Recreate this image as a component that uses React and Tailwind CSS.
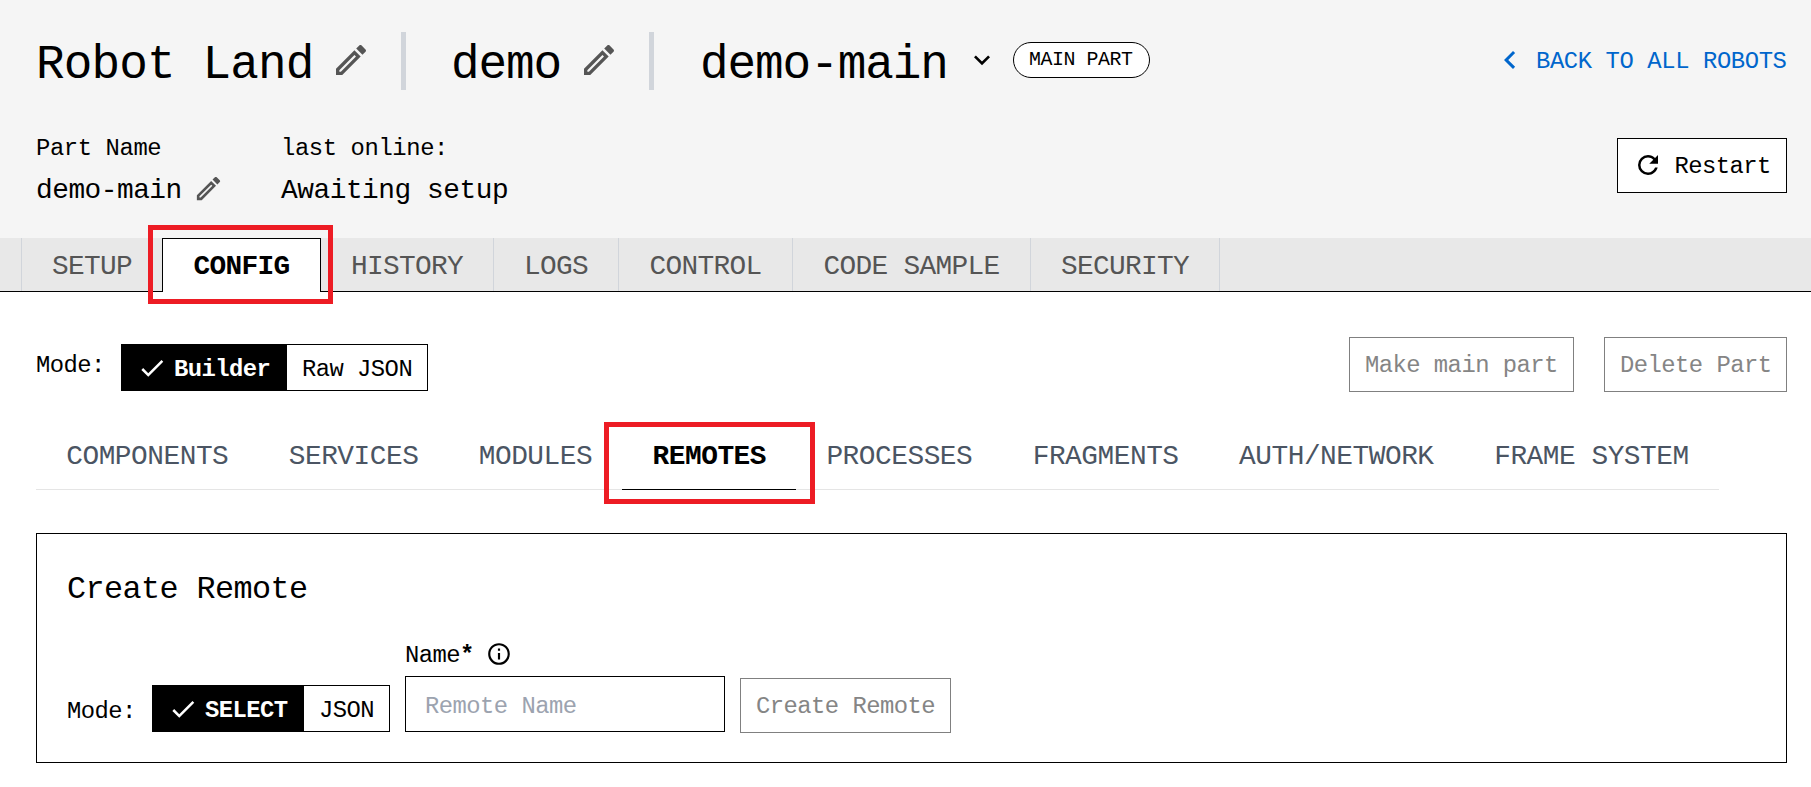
const ICONS = {
  pencil:
    'M14.06,9L15,9.94L5.92,19H5V18.08L14.06,9M17.66,3C17.41,3 17.15,3.1 16.96,3.29L15.13,5.12L18.88,8.87L20.71,7.04C21.1,6.65 21.1,6 20.71,5.63L18.37,3.29C18.17,3.09 17.92,3 17.66,3M14.06,6.19L3,17.25V21H6.75L17.81,9.94L14.06,6.19Z',
  chevronDown: 'M7.41,8.58L12,13.17L16.59,8.58L18,10L12,16L6,10L7.41,8.58Z',
  chevronLeft: 'M15.41,16.58L10.83,12L15.41,7.41L14,6L8,12L14,18L15.41,16.58Z',
  refresh:
    'M17.65,6.35C16.2,4.9 14.21,4 12,4A8,8 0 0,0 4,12A8,8 0 0,0 12,20C15.73,20 18.84,17.45 19.73,14H17.65C16.83,16.33 14.61,18 12,18A6,6 0 0,1 6,12A6,6 0 0,1 12,6C13.66,6 15.14,6.69 16.22,7.78L13,11H20V4L17.65,6.35Z',
  check: 'M21,7L9,19L3.5,13.5L4.91,12.09L9,16.17L19.59,5.59L21,7Z',
  info: 'M11,9H13V7H11M12,20C7.59,20 4,16.41 4,12C4,7.59 7.59,4 12,4C16.41,4 20,7.59 20,12C20,16.41 16.41,20 12,20M12,2A10,10 0 0,0 2,12A10,10 0 0,0 12,22A10,10 0 0,0 22,12A10,10 0 0,0 12,2M11,17H13V11H11V17Z',
};

function Icon({ name, className }) {
  return (
    <svg viewBox="0 0 24 24" fill="currentColor" className={`shrink-0 ${className}`} aria-hidden="true">
      <path d={ICONS[name]} />
    </svg>
  );
}

const mainTabs = [
  { label: 'SETUP', width: 'w-[141px]' },
  { label: 'CONFIG', width: 'w-[159px]', active: true },
  { label: 'HISTORY', width: 'w-[173px]' },
  { label: 'LOGS', width: 'w-[125px]' },
  { label: 'CONTROL', width: 'w-[174px]' },
  { label: 'CODE SAMPLE', width: 'w-[238px]' },
  { label: 'SECURITY', width: 'w-[189px]' },
];

const configTabs = [
  { label: 'COMPONENTS', width: 'w-[222.6px]' },
  { label: 'SERVICES', width: 'w-[190px]' },
  { label: 'MODULES', width: 'w-[173.8px]' },
  { label: 'REMOTES', width: 'w-[173.8px]', active: true },
  { label: 'PROCESSES', width: 'w-[206.3px]' },
  { label: 'FRAGMENTS', width: 'w-[206.3px]' },
  { label: 'AUTH/NETWORK', width: 'w-[255.1px]' },
  { label: 'FRAME SYSTEM', width: 'w-[255.1px]' },
];

function Toggle({ selected, other, className, selectedWidth }) {
  return (
    <div className={`flex h-[47px] border border-black bg-white ${className}`}>
      <div className={`flex bg-black pl-[15px] text-white ${selectedWidth}`}>
        <Icon name="check" className="mt-[8px] size-[30px]" />
        <span className="ml-[7px] mt-[12.6px] font-bold leading-6">{selected}</span>
      </div>
      <span className="ml-[15px] mt-[12.6px] leading-6">{other}</span>
    </div>
  );
}

function OutlineButton({ children, className }) {
  return (
    <button className={`flex h-[55px] items-start border border-[#808080] bg-white pl-[15px] pt-[15.6px] leading-6 text-[#858585] ${className}`}>
      {children}
    </button>
  );
}

export default function App() {
  return (
    <div className="relative h-[787px] w-[1811px] overflow-hidden whitespace-nowrap bg-white font-['Liberation_Mono',monospace] text-[23.85px] leading-6 text-black [&_*]:tracking-[-0.0226em]">
      <header className="h-[238px] bg-[#f5f5f5] pl-9 pr-6 pt-8">
        <div className="flex h-[106px] items-start">
          <h1 className="mt-[9px] w-[294.5px] text-[47.7px] leading-[48px] !tracking-[-0.018em]">Robot Land</h1>
          <Icon name="pencil" className="mt-2 size-10 text-[#555]" />
          <div className="ml-[30.5px] h-[58px] w-[5px] bg-[#d1d5db]" />
          <h1 className="ml-[45px] mt-[9px] w-[128px] text-[47.7px] leading-[48px]">demo</h1>
          <Icon name="pencil" className="mt-2 size-10 text-[#555]" />
          <div className="ml-[30px] h-[58px] w-[5px] bg-[#d1d5db]" />
          <h1 className="ml-[46px] mt-[9px] w-[265px] text-[47.7px] leading-[48px]">demo-main</h1>
          <Icon name="chevronDown" className="ml-px mt-3 size-8" />
          <div className="ml-[15px] mt-2.5 h-9 w-[137px] rounded-full border border-black bg-white pl-[15px] pt-[7px] text-[19.9px] leading-5">
            MAIN PART
          </div>
          <a className="ml-auto flex text-[#0066cc]">
            <Icon name="chevronLeft" className="mt-2.5 size-9" />
            <span className="ml-2 mt-[17.6px] w-[251px] !tracking-[-0.0165em]">BACK TO ALL ROBOTS</span>
          </a>
        </div>
        <div className="flex items-start">
          <div className="w-[245px]">
            <div className="mt-[-1.4px] !tracking-[-0.0165em]">Part Name</div>
            <div className="mt-[12px] flex h-8 items-start">
              <span className="mt-[4px] w-[157px] text-[27.8px] leading-7 !tracking-[-0.0175em]">demo-main</span>
              <Icon name="pencil" className="size-[31px] text-[#555]" />
            </div>
          </div>
          <div>
            <div className="mt-[-1.4px] !tracking-[-0.0165em]">last online:</div>
            <div className="mt-[16px] text-[27.8px] leading-7 !tracking-[-0.0165em]">Awaiting setup</div>
          </div>
          <button className="ml-auto flex h-[55px] w-[170px] items-start border border-black bg-white pl-[15px]">
            <Icon name="refresh" className="mt-[11px] size-[30px]" />
            <span className="ml-[11.5px] mt-[15.6px] leading-6">Restart</span>
          </button>
        </div>
      </header>

      <nav className="flex h-[54px] border-b border-black bg-[#e8e8e8] pl-[21px] text-[27.8px] leading-7 text-[#555]">
        {mainTabs.map((t, i) => (
          <div
            key={t.label}
            className={`flex justify-center pt-[14.6px] !tracking-[-0.025em] ${t.width} ${
              t.active
                ? 'h-[54px] border-x border-t border-black bg-white !pt-[13.6px] font-bold text-black'
                : i === 0
                  ? 'h-[53px] border-l border-[#d1d5db]'
                  : 'h-[53px] border-r border-[#d1d5db]'
            }`}
          >
            {t.label}
          </div>
        ))}
      </nav>

      <main className="pl-9 pr-6">
        <div className="flex h-[130px] items-start">
          <span className="mt-[62.4px] w-[85px]">Mode:</span>
          <Toggle selected="Builder" other="Raw JSON" className="mt-[52px] w-[307px]" selectedWidth="w-[165px]" />
          <OutlineButton className="ml-auto mt-[45px] w-[225px]">Make main part</OutlineButton>
          <OutlineButton className="ml-[30px] mt-[45px] w-[183px]">Delete Part</OutlineButton>
        </div>
        <nav className="flex h-[68px] w-[1683px] border-b border-[#e5e5e5] text-[27.8px] leading-7 text-[#4b5563]">
          {configTabs.map((t) => (
            <div
              key={t.label}
              className={`flex h-[68px] shrink-0 justify-center pt-[20.6px] [&>span]:tracking-[-0.017em] ${t.width} ${
                t.active ? 'border-b border-black font-bold text-black' : ''
              }`}
            >
              <span>{t.label}</span>
            </div>
          ))}
        </nav>
        <section className="mt-[43px] h-[230px] border border-black pl-[30px] pt-[40px]">
          <h2 className="text-[31.8px] leading-8 !tracking-[-0.018em]">Create Remote</h2>
          <div className="mt-[32px] flex items-start">
            <span className="mt-[61.6px] w-[85px]">Mode:</span>
            <Toggle selected="SELECT" other="JSON" className="mt-[47px] w-[238px]" selectedWidth="w-[151px]" />
            <div className="ml-[15px] w-[320px]">
              <div className="flex h-[38px] items-start">
                <span className="mt-[5.6px] w-[81px]">Name<b>*</b></span>
                <Icon name="info" className="mt-[3px] size-[26px]" />
              </div>
              <div className="h-[56px] border border-black bg-white pl-[19px] pt-[17.6px] text-[#9ca3af]">Remote Name</div>
            </div>
            <OutlineButton className="ml-[15px] mt-[40px] w-[211px]">Create Remote</OutlineButton>
          </div>
        </section>
      </main>

      <div className="absolute left-[148px] top-[225px] h-[79px] w-[185px] border-[5px] border-[#ed1c24]" />
      <div className="absolute left-[604px] top-[422px] h-[82px] w-[211px] border-[5px] border-[#ed1c24]" />
    </div>
  );
}
